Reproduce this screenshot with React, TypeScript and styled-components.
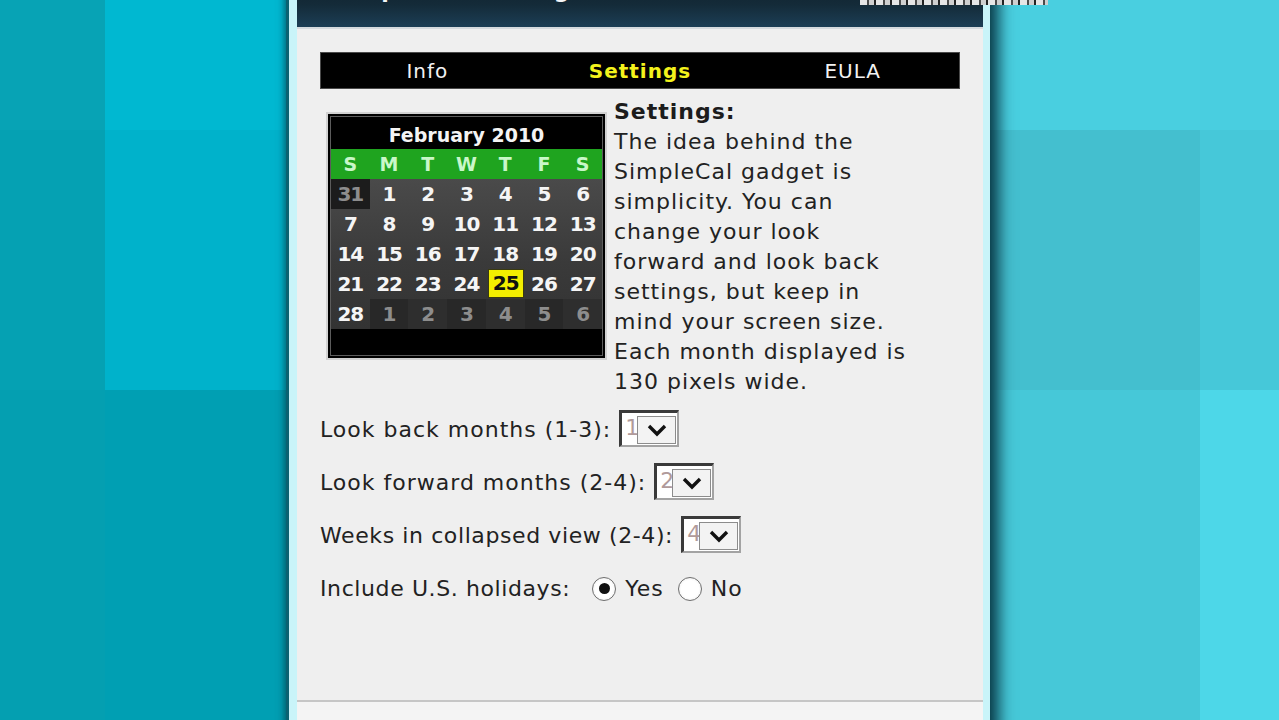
import React from 'react'
import styled, { createGlobalStyle } from 'styled-components'

const GlobalStyle = createGlobalStyle`
  html, body { margin: 0; padding: 0; }
  body {
    font-family: "DejaVu Sans", Verdana, sans-serif;
    overflow: hidden;
  }
`

const Desktop = styled.div`
  position: relative;
  width: 1279px;
  height: 720px;
  overflow: hidden;
  display: grid;
  grid-template-columns: 105px 181px 704px 210px 1fr;
  grid-template-rows: 130px 260px 330px;
`

const Tile = styled.div<{ $bg: string; $col: number; $row: number }>`
  grid-column: ${p => p.$col};
  grid-row: ${p => p.$row};
  background: ${p => p.$bg};
`

const TopStrip = styled.div`
  position: absolute;
  top: 0;
  left: 860px;
  width: 188px;
  height: 5px;
  z-index: 2;
  background: repeating-linear-gradient(90deg, #e6e6e6 0 7px, #4a4a4a 7px 9px, #cfcfcf 9px 14px, #222 14px 16px);
`

const Window = styled.div`
  grid-column: 3;
  grid-row: 1 / -1;
  position: relative;
  z-index: 1;
  margin-top: -22px;
  height: 800px;
  border-left: 3px solid #0b6271;
  padding: 0 7px 0 8px;
  background: #c9f4f9;
  box-shadow: 9px 0 14px rgba(0, 38, 50, 0.85), -2px 0 6px rgba(0, 50, 60, 0.5);
  display: flex;
  flex-direction: column;
`

const TitleBar = styled.div`
  height: 49px;
  flex-shrink: 0;
  background: linear-gradient(#0f1f29 0%, #142b39 55%, #1c3e55 100%);
  border-bottom: 2px solid #d5dade;
  display: flex;
  align-items: flex-start;
  padding-left: 35px;
`

const TitleText = styled.span`
  color: #f4f6f8;
  font-weight: bold;
  font-size: 22px;
  line-height: 26px;
  letter-spacing: 1px;
`

const Content = styled.div`
  height: 671px;
  flex-shrink: 0;
  box-sizing: border-box;
  background: #efefef;
  padding: 23px 23px 0;
  color: #222;
  font-size: 22px;
  letter-spacing: 1px;
`

const TabBar = styled.div`
  display: grid;
  grid-template-columns: repeat(3, 1fr);
  height: 37px;
  box-sizing: border-box;
  background: #000;
  border: 1px solid #4a4a4a;
`

const Tab = styled.div<{ $active?: boolean }>`
  text-align: center;
  line-height: 37px;
  font-size: 20px;
  color: ${p => (p.$active ? '#f3f21c' : '#f2f2f2')};
  font-weight: ${p => (p.$active ? 'bold' : 'normal')};
`

const Main = styled.div`
  display: flex;
  align-items: flex-start;
  margin-top: 8px;
`

const Calendar = styled.div`
  width: 281px;
  height: 248px;
  box-sizing: border-box;
  margin: 15px 0 0 6px;
  border: 2px solid #d2d2d2;
  padding: 2px;
  background: #000;
  flex-shrink: 0;
`

const CalendarInner = styled.div`
  height: 100%;
  box-sizing: border-box;
  border: 1px solid #5c5c5c;
  display: flex;
  flex-direction: column;
  letter-spacing: 0;
`

const MonthTitle = styled.div`
  height: 32px;
  line-height: 36px;
  text-align: center;
  color: #f4f4f4;
  font-weight: bold;
  font-size: 19px;
`

const WeekHeader = styled.div`
  display: grid;
  grid-template-columns: repeat(7, 1fr);
  height: 30px;
  background: #1fa41f;
`

const WeekDay = styled.div`
  text-align: center;
  line-height: 30px;
  font-weight: bold;
  font-size: 19px;
  color: #c9f7c9;
`

const DayGrid = styled.div`
  display: grid;
  grid-template-columns: repeat(7, 1fr);
  grid-auto-rows: 30px;
  background: linear-gradient(#4a4a4a, #3a3a3a 55%, #333);
`

const Day = styled.div<{ $muted?: boolean; $shade?: string; $today?: boolean }>`
  text-align: center;
  line-height: ${p => (p.$today ? '28px' : '30px')};
  font-weight: bold;
  font-size: 20px;
  letter-spacing: -1px;
  color: ${p => (p.$today ? '#111' : p.$muted ? '#8d8d8d' : '#f5f5f5')};
  background: ${p => (p.$today ? '#f3ee00' : p.$shade || 'transparent')};
  ${p => (p.$today ? 'margin: 0 1px 1px 2px; box-shadow: inset 0 0 0 1px #3a3a10;' : '')}
`

const CalendarFoot = styled.div`
  flex: 1;
  background: #000;
`

const Blurb = styled.div`
  margin-left: 7px;
  line-height: 30px;
  white-space: nowrap;
`

const BlurbTitle = styled.div`
  font-weight: bold;
  color: #1c1c1c;
`

const Form = styled.div`
  margin-top: 6px;
`

const FieldRow = styled.div`
  display: flex;
  align-items: center;
  height: 53px;
`

const Label = styled.span<{ $tight?: boolean }>`
  margin-right: 8px;
  letter-spacing: ${p => (p.$tight ? '0.6px' : '1px')};
`

const Select = styled.div`
  display: flex;
  width: 60px;
  height: 37px;
  box-sizing: border-box;
  margin-top: -3px;
  background: #fff;
  border-top: 3px solid #3a3a3a;
  border-left: 3px solid #3a3a3a;
  border-right: 2px solid #a3a3a3;
  border-bottom: 2px solid #a3a3a3;
`

const SelectValue = styled.span`
  width: 15px;
  overflow: hidden;
  font-size: 22px;
  line-height: 30px;
  color: #b09a9a;
  text-indent: 3px;
  white-space: nowrap;
`

const SelectButton = styled.span`
  flex: 1;
  margin: 3px 1px 1px 0;
  background: #f3f3f3;
  border: 1px solid #8c8c8c;
  display: flex;
  align-items: center;
  justify-content: center;
`

const Radio = styled.span`
  display: inline-flex;
  align-items: center;
  margin-left: 14px;
  &:first-of-type {
    margin-left: 10px;
  }
`

const RadioCircle = styled.span<{ $checked?: boolean }>`
  width: 24px;
  height: 24px;
  box-sizing: border-box;
  border-radius: 50%;
  border: 1.5px solid #6e6e6e;
  background: radial-gradient(circle, #fff 55%, #e4e4e4);
  display: inline-flex;
  align-items: center;
  justify-content: center;
  margin-right: 9px;
  &::after {
    content: '';
    width: 11px;
    height: 11px;
    border-radius: 50%;
    background: ${p => (p.$checked ? '#111' : 'transparent')};
  }
`

const Footer = styled.div`
  flex: 1;
  background: #f4f4f4;
  border-top: 2px solid #c6c6c6;
`

const Chevron = () => (
  <svg width="22" height="14" viewBox="0 0 22 14">
    <path d="M3 3 L11 11 L19 3" fill="none" stroke="#111" strokeWidth="3.4" strokeLinejoin="miter" />
  </svg>
)

const tiles = [
  { col: 1, row: 1, bg: '#07a3b5' },
  { col: 1, row: 2, bg: '#05a1b3' },
  { col: 1, row: 3, bg: '#049fb1' },
  { col: 2, row: 1, bg: '#00b8d1' },
  { col: 2, row: 2, bg: '#00b2cb' },
  { col: 2, row: 3, bg: '#009fb3' },
  { col: 4, row: 1, bg: '#49cfe0' },
  { col: 4, row: 2, bg: '#44bfcf' },
  { col: 4, row: 3, bg: '#46c8d8' },
  { col: 5, row: 1, bg: '#49cee0' },
  { col: 5, row: 2, bg: '#46c8d9' },
  { col: 5, row: 3, bg: '#4dd7e8' },
]

type Cell = { n: number; muted?: boolean; shade?: string; today?: boolean }

const weeks: Cell[][] = [
  [{ n: 31, muted: true, shade: '#1c1c1c' }, ...[1, 2, 3, 4, 5, 6].map(n => ({ n }))],
  [7, 8, 9, 10, 11, 12, 13].map(n => ({ n })),
  [14, 15, 16, 17, 18, 19, 20].map(n => ({ n })),
  [21, 22, 23, 24, 25, 26, 27].map(n => ({ n, today: n === 25 })),
  [{ n: 28 }, ...[1, 2, 3, 4, 5, 6].map(n => ({ n, muted: true, shade: n % 2 ? '#282828' : '#2e2e2e' }))],
]

const fields = [
  { label: 'Look back months (1-3):', value: '1', tight: false },
  { label: 'Look forward months (2-4):', value: '2', tight: false },
  { label: 'Weeks in collapsed view (2-4):', value: '4', tight: true },
]

export default function App() {
  return (
    <Desktop>
      <GlobalStyle />
      {tiles.map(t => (
        <Tile key={`${t.col}-${t.row}`} $col={t.col} $row={t.row} $bg={t.bg} />
      ))}
      <TopStrip />
      <Window>
        <TitleBar>
          <TitleText>SimpleCal Settings</TitleText>
        </TitleBar>
        <Content>
          <TabBar>
            <Tab>Info</Tab>
            <Tab $active>Settings</Tab>
            <Tab>EULA</Tab>
          </TabBar>
          <Main>
            <Calendar>
              <CalendarInner>
                <MonthTitle>February 2010</MonthTitle>
                <WeekHeader>
                  {['S', 'M', 'T', 'W', 'T', 'F', 'S'].map((d, i) => (
                    <WeekDay key={i}>{d}</WeekDay>
                  ))}
                </WeekHeader>
                <DayGrid>
                  {weeks.flat().map((c, i) => (
                    <Day key={i} $muted={c.muted} $shade={c.shade} $today={c.today}>
                      {c.n}
                    </Day>
                  ))}
                </DayGrid>
                <CalendarFoot />
              </CalendarInner>
            </Calendar>
            <Blurb>
              <BlurbTitle>Settings:</BlurbTitle>
              The idea behind the<br />
              SimpleCal gadget is<br />
              simplicity. You can<br />
              change your look<br />
              forward and look back<br />
              settings, but keep in<br />
              mind your screen size.<br />
              Each month displayed is<br />
              130 pixels wide.
            </Blurb>
          </Main>
          <Form>
            {fields.map(f => (
              <FieldRow key={f.label}>
                <Label $tight={f.tight}>{f.label}</Label>
                <Select>
                  <SelectValue>{f.value}</SelectValue>
                  <SelectButton>
                    <Chevron />
                  </SelectButton>
                </Select>
              </FieldRow>
            ))}
            <FieldRow>
              <Label $tight>Include U.S. holidays:</Label>
              <Radio>
                <RadioCircle $checked />
                Yes
              </Radio>
              <Radio>
                <RadioCircle />
                No
              </Radio>
            </FieldRow>
          </Form>
        </Content>
        <Footer />
      </Window>
    </Desktop>
  )
}
